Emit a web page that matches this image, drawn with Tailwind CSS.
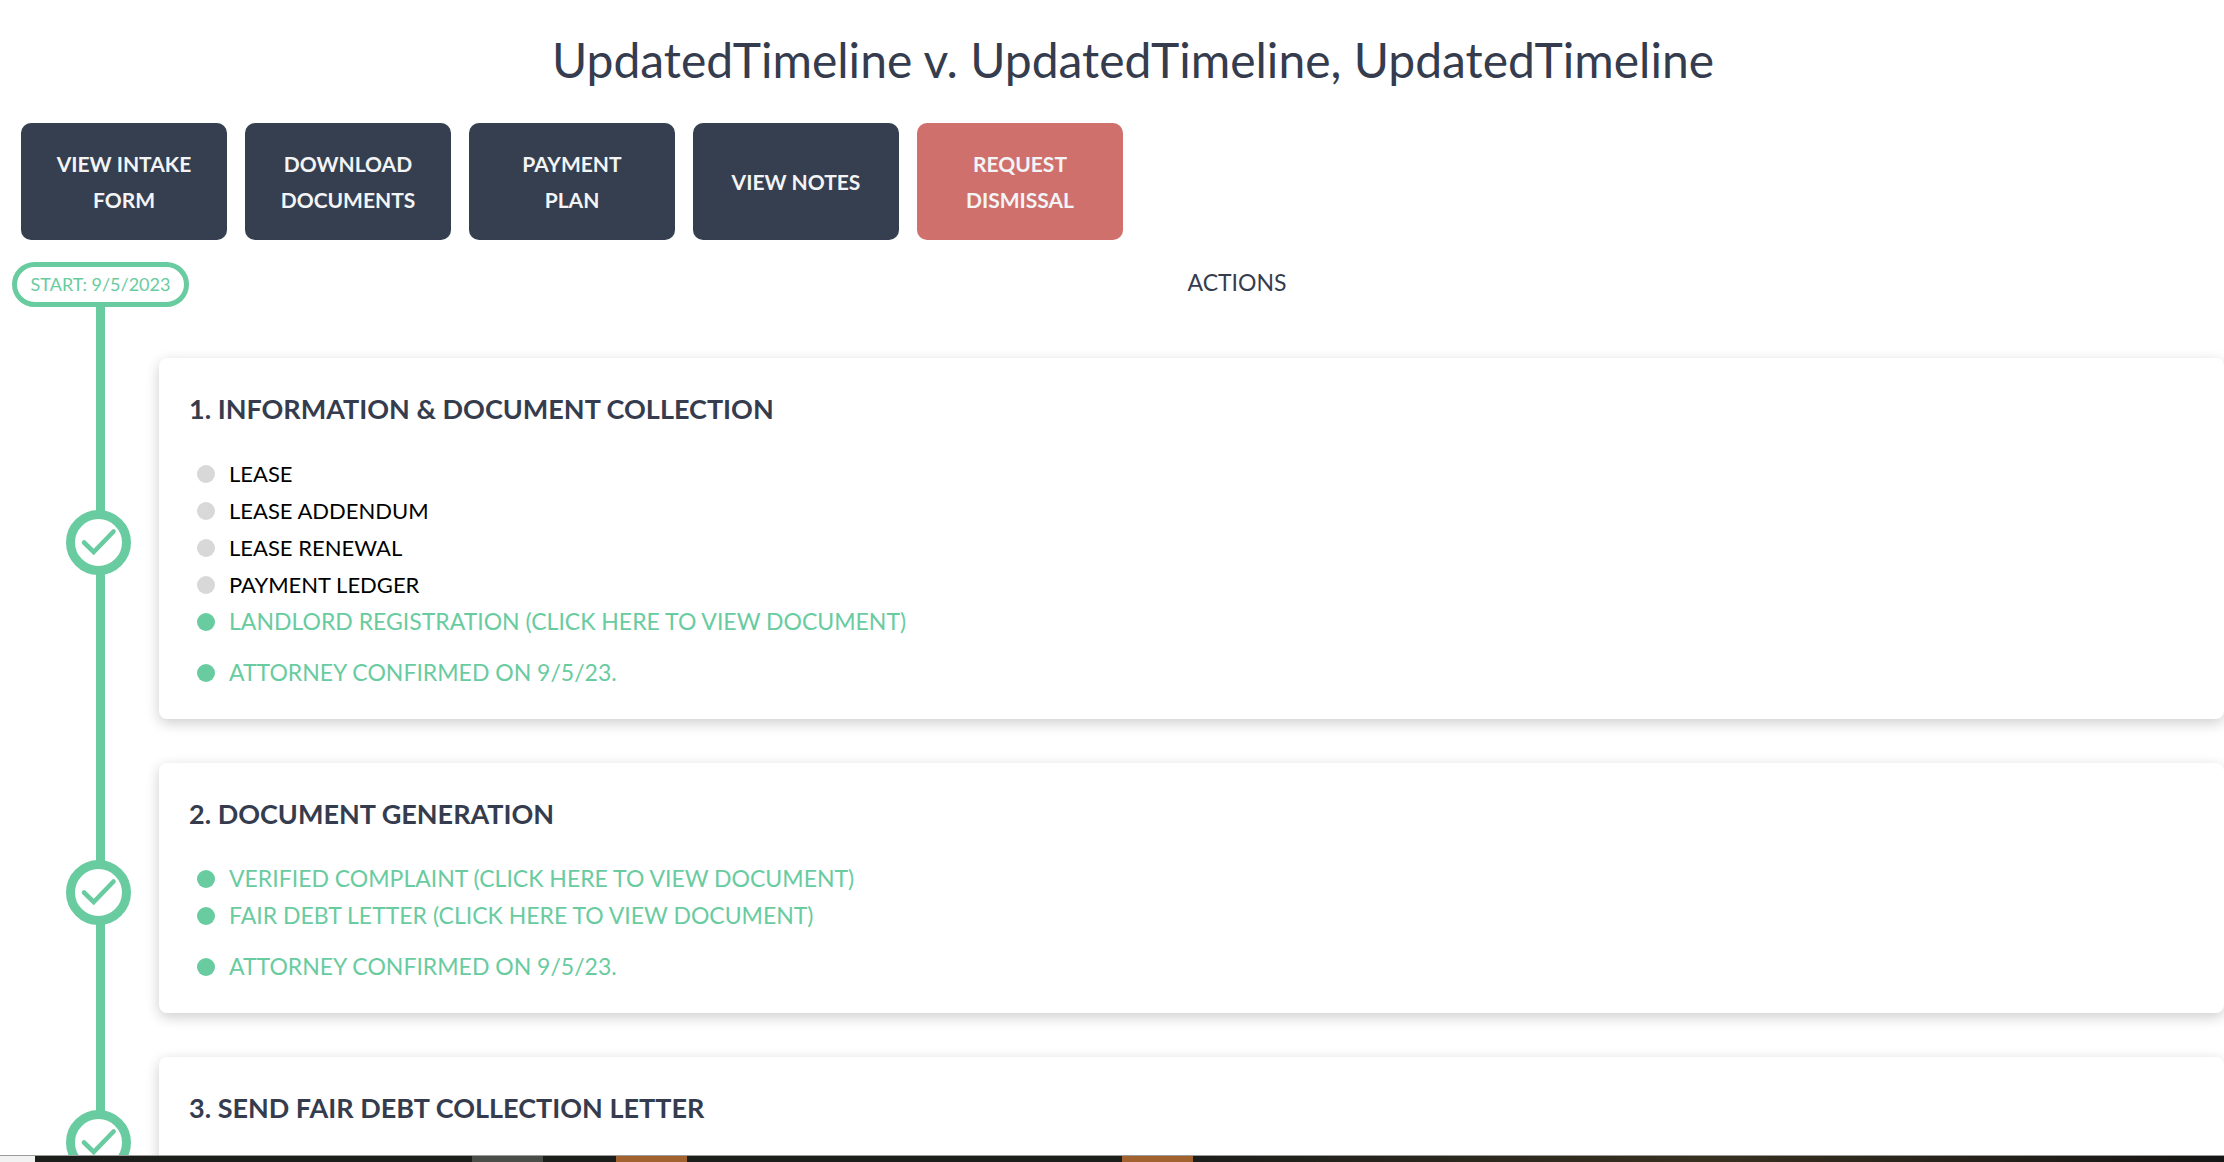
<!DOCTYPE html>
<html lang="en">
<head>
<meta charset="utf-8">
<meta name="viewport" content="width=device-width, initial-scale=1">
<title>Case timeline</title>
<script src="https://cdn.jsdelivr.net/npm/@tailwindcss/browser@4"></script>
</head>
<body class="flex h-screen flex-col overflow-hidden bg-white font-['Lato',sans-serif] text-[#353c4e]">
<svg class="hidden" aria-hidden="true">
  <symbol id="check" viewBox="0 0 65 65">
    <circle cx="32.5" cy="32.5" r="28" fill="#fff" stroke="#69cba0" stroke-width="9"/>
    <path d="M18 32.5 27.7 42 47.5 21.5" fill="none" stroke="#69cba0" stroke-width="4.6" stroke-linecap="round" stroke-linejoin="miter"/>
  </symbol>
</svg>

<main class="min-h-0 flex-1 overflow-hidden">
  <h1 class="pt-7 pl-[42px] text-center text-[48px] leading-[64px]">UpdatedTimeline v. UpdatedTimeline, UpdatedTimeline</h1>

  <div class="mt-[31px] flex gap-[18px] pl-[21px] text-[21px] leading-[36px] font-bold text-gray-100">
    <button type="button" class="h-[117px] w-[206px] rounded-[10px] bg-[#363f4f] px-6">VIEW INTAKE FORM</button>
    <button type="button" class="h-[117px] w-[206px] rounded-[10px] bg-[#363f4f] px-6">DOWNLOAD DOCUMENTS</button>
    <button type="button" class="h-[117px] w-[206px] rounded-[10px] bg-[#363f4f] px-12">PAYMENT PLAN</button>
    <button type="button" class="h-[117px] w-[206px] rounded-[10px] bg-[#363f4f] px-6">VIEW NOTES</button>
    <button type="button" class="h-[117px] w-[206px] rounded-[10px] bg-[#d0706d] px-6">REQUEST DISMISSAL</button>
  </div>

  <div class="mt-[22px] flex items-start pl-3">
    <div class="flex h-[45px] w-[177px] items-center justify-center rounded-full border-[5px] border-[#69cba0] text-[18px] text-[#69cba0]">START: 9/5/2023</div>
    <div class="flex-1 pl-[61px] pt-1 text-center text-[23px] leading-[32px]">ACTIONS</div>
  </div>

  <div class="relative pt-[51px]">
    <div class="absolute inset-y-0 left-[96px] w-[9px] bg-[#69cba0]"></div>
    <div class="relative flex flex-col gap-[44px]">

      <section class="flex items-center">
        <div class="w-[159px] shrink-0 pt-2 pl-[66px]"><svg class="size-[65px]" aria-hidden="true"><use href="#check"/></svg></div>
        <div class="flex-1 rounded-lg bg-white pt-[33px] pr-[30px] pb-7 pl-[30px] shadow-[0_4px_14px_rgba(0,0,0,0.2)]">
          <h2 class="text-[27px] leading-[36px] font-bold">1. INFORMATION &amp; DOCUMENT COLLECTION</h2>
          <ul class="mt-7 pl-2 text-[22px] leading-[37px] text-black">
            <li class="flex items-center gap-[14px]"><span class="size-[18px] rounded-full bg-[#d8d8d8]"></span>LEASE</li>
            <li class="flex items-center gap-[14px]"><span class="size-[18px] rounded-full bg-[#d8d8d8]"></span>LEASE ADDENDUM</li>
            <li class="flex items-center gap-[14px]"><span class="size-[18px] rounded-full bg-[#d8d8d8]"></span>LEASE RENEWAL</li>
            <li class="flex items-center gap-[14px]"><span class="size-[18px] rounded-full bg-[#d8d8d8]"></span>PAYMENT LEDGER</li>
            <li class="flex items-center gap-[14px] text-[23px] text-[#69cba0]"><span class="size-[18px] rounded-full bg-[#69cba0]"></span><a href="#">LANDLORD REGISTRATION (CLICK HERE TO VIEW DOCUMENT)</a></li>
            <li class="mt-[14px] flex items-center gap-[14px] text-[23px] text-[#69cba0]"><span class="size-[18px] rounded-full bg-[#69cba0]"></span>ATTORNEY CONFIRMED ON 9/5/23.</li>
          </ul>
        </div>
      </section>

      <section class="flex items-center">
        <div class="w-[159px] shrink-0 pt-2 pl-[66px]"><svg class="size-[65px]" aria-hidden="true"><use href="#check"/></svg></div>
        <div class="flex-1 rounded-lg bg-white pt-[33px] pr-[30px] pb-7 pl-[30px] shadow-[0_4px_14px_rgba(0,0,0,0.2)]">
          <h2 class="text-[27px] leading-[36px] font-bold">2. DOCUMENT GENERATION</h2>
          <ul class="mt-7 pl-2 text-[23px] leading-[37px] text-[#69cba0]">
            <li class="flex items-center gap-[14px]"><span class="size-[18px] rounded-full bg-[#69cba0]"></span><a href="#">VERIFIED COMPLAINT (CLICK HERE TO VIEW DOCUMENT)</a></li>
            <li class="flex items-center gap-[14px]"><span class="size-[18px] rounded-full bg-[#69cba0]"></span><a href="#">FAIR DEBT LETTER (CLICK HERE TO VIEW DOCUMENT)</a></li>
            <li class="mt-[14px] flex items-center gap-[14px]"><span class="size-[18px] rounded-full bg-[#69cba0]"></span>ATTORNEY CONFIRMED ON 9/5/23.</li>
          </ul>
        </div>
      </section>

      <section class="flex items-center">
        <div class="w-[159px] shrink-0 pt-2 pl-[66px]"><svg class="size-[65px]" aria-hidden="true"><use href="#check"/></svg></div>
        <div class="min-h-[162px] flex-1 rounded-lg bg-white pt-[33px] pr-[30px] pb-7 pl-[30px] shadow-[0_4px_14px_rgba(0,0,0,0.2)]">
          <h2 class="text-[27px] leading-[36px] font-bold">3. SEND FAIR DEBT COLLECTION LETTER</h2>
        </div>
      </section>
    </div>
  </div>
</main>

<footer class="flex h-[7px] shrink-0 border-t border-[#9b9b9b] bg-[#1c1e1b]" aria-hidden="true">
  <div class="w-[35px] bg-[#f2f2f2]"></div>
  <div class="ml-[437px] w-[71px] bg-[#4b4d48]"></div>
  <div class="ml-[73px] w-[71px] bg-[#a1622f]"></div>
  <div class="ml-[435px] w-[71px] bg-[#a1622f]"></div>
  <div class="flex-1 bg-linear-to-r from-[#1c1e1b] via-[#38301f] to-[#151515]"></div>
</footer>
</body>
</html>
